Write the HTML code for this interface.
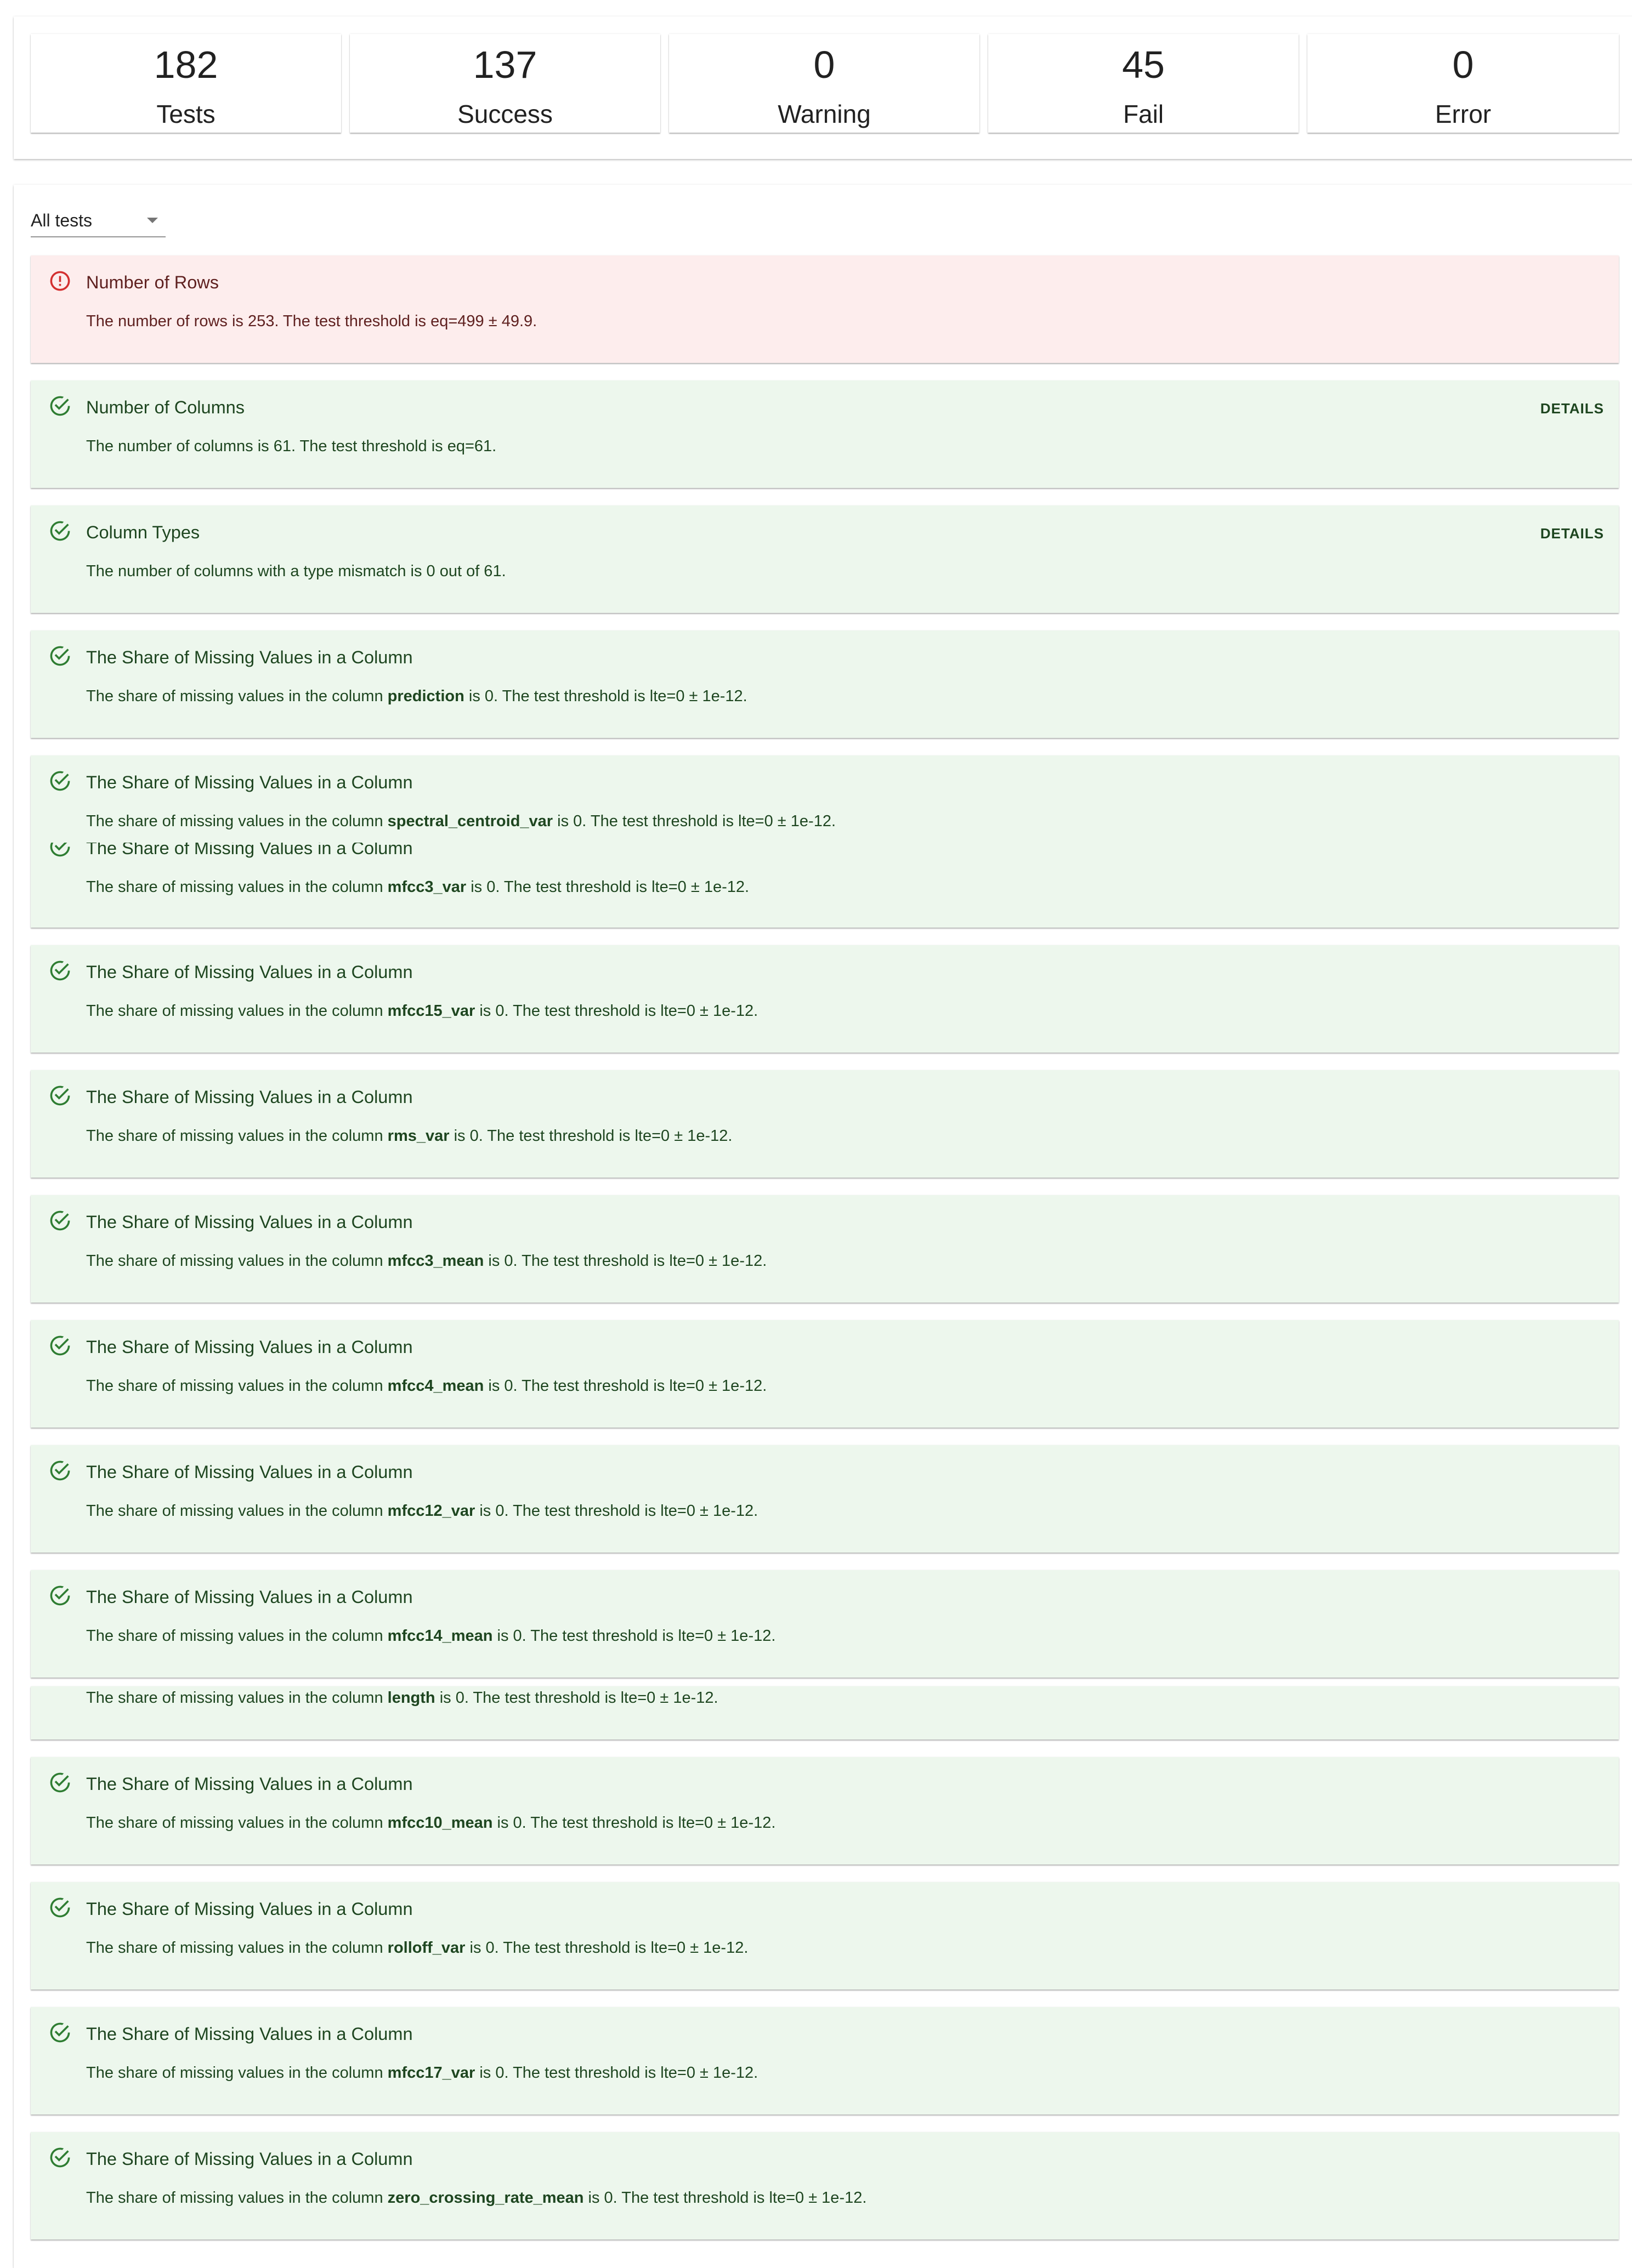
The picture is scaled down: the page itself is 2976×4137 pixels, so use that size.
<!DOCTYPE html>
<html><head><meta charset="utf-8">
<style>
*{margin:0;padding:0;box-sizing:border-box}
html,body{width:2976px;height:4050px;overflow:hidden;background:#fff;font-family:"Liberation Sans",Arial,sans-serif}
.panel{position:absolute;left:25px;right:-20px;background:#fff;box-shadow:0 2px 3px rgba(0,0,0,.22),0 0 4px rgba(0,0,0,.08)}
.stat{position:absolute;top:62px;width:566px;height:180px;background:#fff;box-shadow:0 2px 2px rgba(0,0,0,.28),0 0 3px rgba(0,0,0,.1);text-align:center;color:rgba(0,0,0,.87)}
.stat .n{position:absolute;left:0;right:0;top:56px;font-size:70px;line-height:84px;margin-top:-42px}
.stat .l{position:absolute;left:0;right:0;top:146px;font-size:46px;line-height:56px;margin-top:-28px}
.card{position:absolute;left:56px;width:2896px;height:196px;background:#edf7ed;color:#1e4620;box-shadow:0 2px 2px rgba(0,0,0,.28),0 0 2px rgba(0,0,0,.08);overflow:hidden}
.card.err{background:#fdeded;color:#5f2120}
.ic{position:absolute;left:32px;top:25px;width:43px;height:43px}
.t{position:absolute;left:101px;top:49px;margin-top:-20px;font-size:32.5px;line-height:40px;white-space:nowrap}
.b{position:absolute;left:101px;top:120px;margin-top:-18px;font-size:29px;line-height:36px;white-space:nowrap}
.b b{font-weight:bold}
.d{position:absolute;right:27px;top:51px;margin-top:-16px;font-size:26px;line-height:32px;font-weight:bold;letter-spacing:1px}
</style></head><body>
<div class="panel" style="top:30px;height:260px"></div>
<div class="stat" style="left:56px"><div class="n">182</div><div class="l">Tests</div></div>
<div class="stat" style="left:638px"><div class="n">137</div><div class="l">Success</div></div>
<div class="stat" style="left:1220px"><div class="n">0</div><div class="l">Warning</div></div>
<div class="stat" style="left:1802px"><div class="n">45</div><div class="l">Fail</div></div>
<div class="stat" style="left:2384px;width:568px"><div class="n">0</div><div class="l">Error</div></div>

<div class="panel" style="top:337px;height:3800px"></div>
<div style="position:absolute;left:56px;top:384px;font-size:32px;line-height:36px;color:rgba(0,0,0,.87)">All tests</div>
<div style="position:absolute;left:56px;top:431px;width:246px;height:2px;background:#949494"></div>
<div style="position:absolute;left:268px;top:397px;width:0;height:0;border-left:10px solid transparent;border-right:10px solid transparent;border-top:10px solid #757575"></div>

<svg width="0" height="0" style="position:absolute"><defs>
<symbol id="ok" viewBox="0 0 24 24"><path fill="#2e7d32" d="M20,12A8,8 0 0,1 12,20A8,8 0 0,1 4,12A8,8 0 0,1 12,4C12.76,4 13.5,4.11 14.2,4.31L15.77,2.74C14.61,2.26 13.34,2 12,2A10,10 0 0,0 2,12A10,10 0 0,0 12,22A10,10 0 0,0 22,12M7.91,10.08L6.5,11.5L11,16L21,6L19.59,4.58L11,13.170L7.91,10.08Z"/></symbol>
<symbol id="er" viewBox="0 0 24 24"><path fill="#d32f2f" d="M11 15h2v2h-2zm0-8h2v6h-2zm.99-5C6.47 2 2 6.48 2 12s4.47 10 9.99 10C17.52 22 22 17.52 22 12S17.520 2 11.99 2zM12 20c-4.42 0-8-3.58-8-8s3.58-8 8-8 8 3.58 8 8-3.58 8-8 8z"/></symbol>
</defs></svg>

<div class="card err" style="top:466px"><svg class="ic"><use href="#er"/></svg><div class="t">Number of Rows</div><div class="b">The number of rows is 253. The test threshold is eq=499 ± 49.9.</div></div>
<div class="card" style="top:694px"><svg class="ic"><use href="#ok"/></svg><div class="t">Number of Columns</div><div class="d">DETAILS</div><div class="b">The number of columns is 61. The test threshold is eq=61.</div></div>
<div class="card" style="top:922px"><svg class="ic"><use href="#ok"/></svg><div class="t">Column Types</div><div class="d">DETAILS</div><div class="b">The number of columns with a type mismatch is 0 out of 61.</div></div>
<div class="card" style="top:1150px"><svg class="ic"><use href="#ok"/></svg><div class="t">The Share of Missing Values in a Column</div><div class="b">The share of missing values in the column <b>prediction</b> is 0. The test threshold is lte=0 ± 1e-12.</div></div>

<div class="card" style="top:1378px;height:314px">
<svg class="ic"><use href="#ok"/></svg><div class="t">The Share of Missing Values in a Column</div><div class="b">The share of missing values in the column <b>spectral_centroid_var</b> is 0. The test threshold is lte=0 ± 1e-12.</div>
<div style="position:absolute;left:0;right:0;top:159px;bottom:0;overflow:hidden">
<div style="position:absolute;left:0;right:0;top:-39px;height:196px">
<svg class="ic"><use href="#ok"/></svg><div class="t">The Share of Missing Values in a Column</div><div class="b">The share of missing values in the column <b>mfcc3_var</b> is 0. The test threshold is lte=0 ± 1e-12.</div>
</div></div></div>

<div class="card" style="top:1724px"><svg class="ic"><use href="#ok"/></svg><div class="t">The Share of Missing Values in a Column</div><div class="b">The share of missing values in the column <b>mfcc15_var</b> is 0. The test threshold is lte=0 ± 1e-12.</div></div>
<div class="card" style="top:1952px"><svg class="ic"><use href="#ok"/></svg><div class="t">The Share of Missing Values in a Column</div><div class="b">The share of missing values in the column <b>rms_var</b> is 0. The test threshold is lte=0 ± 1e-12.</div></div>
<div class="card" style="top:2180px"><svg class="ic"><use href="#ok"/></svg><div class="t">The Share of Missing Values in a Column</div><div class="b">The share of missing values in the column <b>mfcc3_mean</b> is 0. The test threshold is lte=0 ± 1e-12.</div></div>
<div class="card" style="top:2408px"><svg class="ic"><use href="#ok"/></svg><div class="t">The Share of Missing Values in a Column</div><div class="b">The share of missing values in the column <b>mfcc4_mean</b> is 0. The test threshold is lte=0 ± 1e-12.</div></div>
<div class="card" style="top:2636px"><svg class="ic"><use href="#ok"/></svg><div class="t">The Share of Missing Values in a Column</div><div class="b">The share of missing values in the column <b>mfcc12_var</b> is 0. The test threshold is lte=0 ± 1e-12.</div></div>
<div class="card" style="top:2864px"><svg class="ic"><use href="#ok"/></svg><div class="t">The Share of Missing Values in a Column</div><div class="b">The share of missing values in the column <b>mfcc14_mean</b> is 0. The test threshold is lte=0 ± 1e-12.</div></div>
<div class="card" style="top:3076px;height:97px"><div class="b" style="top:21px">The share of missing values in the column <b>length</b> is 0. The test threshold is lte=0 ± 1e-12.</div></div>
<div class="card" style="top:3205px"><svg class="ic"><use href="#ok"/></svg><div class="t">The Share of Missing Values in a Column</div><div class="b">The share of missing values in the column <b>mfcc10_mean</b> is 0. The test threshold is lte=0 ± 1e-12.</div></div>
<div class="card" style="top:3433px"><svg class="ic"><use href="#ok"/></svg><div class="t">The Share of Missing Values in a Column</div><div class="b">The share of missing values in the column <b>rolloff_var</b> is 0. The test threshold is lte=0 ± 1e-12.</div></div>
<div class="card" style="top:3661px"><svg class="ic"><use href="#ok"/></svg><div class="t">The Share of Missing Values in a Column</div><div class="b">The share of missing values in the column <b>mfcc17_var</b> is 0. The test threshold is lte=0 ± 1e-12.</div></div>
<div class="card" style="top:3889px"><svg class="ic"><use href="#ok"/></svg><div class="t">The Share of Missing Values in a Column</div><div class="b">The share of missing values in the column <b>zero_crossing_rate_mean</b> is 0. The test threshold is lte=0 ± 1e-12.</div></div>
</body></html>
